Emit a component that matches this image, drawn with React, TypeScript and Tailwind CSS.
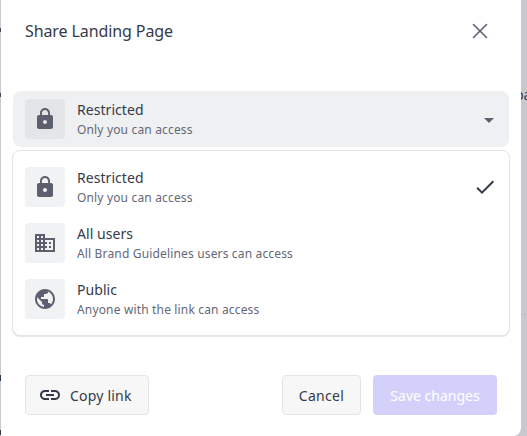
import React from "react";
import { X } from "lucide-react";
import { MdLock, MdLink, MdPublic, MdDomain, MdArrowDropDown, MdCheck } from "react-icons/md";

const options = [
	{ title: "Restricted", sub: "Only you can access", icon: MdLock, checked: true },
	{ title: "All users", sub: "All Brand Guidelines users can access", icon: MdDomain },
	{ title: "Public", sub: "Anyone with the link can access", icon: MdPublic },
];

const Row = ({ title, sub, icon: Icon, tile }: { title: string; sub: string; icon: typeof MdLock; tile: string }) => (
	<div className="flex items-center gap-3">
		<div className={`flex h-10 w-10 items-center justify-center rounded ${tile}`}>
			<Icon size={24} className="text-[#5c5f6e]" />
		</div>
		<div className="flex h-10 flex-col pt-px">
			<span className="text-[14px] leading-5 tracking-[0.05px] text-[#353a4b]">{title}</span>
			<span className="text-[12px] leading-5 tracking-[0.16px] text-[#656877]">{sub}</span>
		</div>
	</div>
);

export default function App() {
	return (
		<div
			className="flex h-[436px] w-[527px] overflow-hidden bg-[#c8c8cd]"
			style={{ fontFamily: '"Noto Sans", sans-serif' }}
		>
			{/* page behind the dialog, only a sliver shows on each side */}
			<div className="flex w-px shrink-0 flex-col">
				<div className="mt-[28px] h-[4px] bg-[#3f4a5c]" />
				<div className="mt-[61px] h-[4px] bg-[#3f4a5c]" />
				<div className="mt-[278px] h-[6px] bg-[#2b3a4c]" />
				<div className="mt-[49px] h-[5px] bg-[#2b3a4c]" />
			</div>
			<div className="flex h-full w-[520px] shrink-0 flex-col rounded-br-lg bg-white">
				<div className="flex h-[62px] items-center justify-between pl-6 pr-[28px]">
					<span className="text-[16px] tracking-[-0.1px] text-[#353a4b]">Share Landing Page</span>
					<X size={26} strokeWidth={1.5} className="text-[#5c5f6e]" />
				</div>
				<div className="mt-[29px] flex h-14 w-[496px] items-center justify-between self-center rounded-lg bg-[#eff0f2] pl-3 pr-2">
					<Row {...options[0]} tile="bg-[#e4e5e8]" />
					<MdArrowDropDown size={24} className="mt-px text-[#5c5f6e]" />
				</div>
				<div className="ml-[11px] mt-[3px] flex h-[186px] w-[498px] flex-col gap-4 rounded-lg border border-[#e4e5e8] bg-white px-3 pt-4 shadow-[0_1px_1px_rgba(0,0,0,0.1)]">
					{options.map((o) => (
						<div key={o.title} className="flex items-center justify-between">
							<Row {...o} tile="bg-[#f1f2f4]" />
							{o.checked && <MdCheck size={24} className="text-[#353a4b]" />}
						</div>
					))}
				</div>
				<div className="mt-[39px] flex items-center justify-between pl-6 pr-6">
					<button className="flex h-10 w-[124px] items-center gap-2 rounded border border-[#e4e5e8] bg-[#f7f7f8] pl-3 text-[14px] tracking-[0.2px] text-[#353a4b]">
						<MdLink size={24} />
						Copy link
					</button>
					<div className="flex gap-3">
						<button className="h-10 w-[79px] rounded border border-[#e4e5e8] bg-[#f7f7f8] text-[14px] tracking-[0.3px] text-[#353a4b]">
							Cancel
						</button>
						<button className="h-10 w-[124px] rounded bg-[#d3d1fc] text-[14px] text-white">Save changes</button>
					</div>
				</div>
			</div>
			<div className="w-[6px] shrink-0 overflow-hidden">
				<div className="-ml-[6px] mt-[85px] whitespace-nowrap text-[14px] leading-5 text-[#353a4b]">pa</div>
				<div className="mt-[209px] h-px bg-[#bcbcd0]" />
			</div>
		</div>
	);
}
